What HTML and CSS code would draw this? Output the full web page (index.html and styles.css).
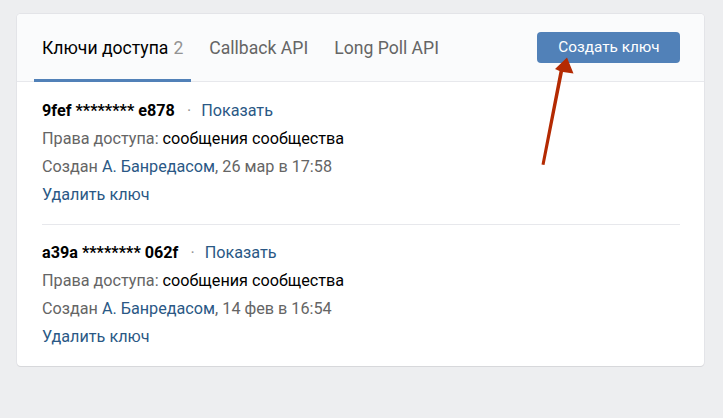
FILE: index.html
```html
<!DOCTYPE html>
<html lang="ru">
<head>
<meta charset="utf-8">
<link rel="stylesheet" href="styles.css">
</head>
<body>
<div class="page">
  <div class="card">
    <div class="tabs">
      <div class="tab active">Ключи доступа <span class="count">2</span></div>
      <div class="tab">Callback API</div>
      <div class="tab">Long Poll API</div>
      <div class="spacer"></div>
      <button class="btn">Создать ключ</button>
    </div>
    <div class="keys">
      <div class="key">
        <div class="row"><span class="token">9fef ******** e878</span><span class="dot">·</span><a class="link">Показать</a></div>
        <div class="row"><span class="label">Права доступа:</span> сообщения сообщества</div>
        <div class="row label">Создан <a class="link">А. Банредасом</a>, 26 мар в 17:58</div>
        <div class="row"><a class="link">Удалить ключ</a></div>
      </div>
      <div class="key">
        <div class="row"><span class="token">a39a ******** 062f</span><span class="dot">·</span><a class="link">Показать</a></div>
        <div class="row"><span class="label">Права доступа:</span> сообщения сообщества</div>
        <div class="row label">Создан <a class="link">А. Банредасом</a>, 14 фев в 16:54</div>
        <div class="row"><a class="link">Удалить ключ</a></div>
      </div>
    </div>
  </div>
  <svg class="arrow" width="723" height="418" viewBox="0 0 723 418">
    <path d="M541.5 164.5 L544.5 165 L563 72 L573.5 73.5 L567 57.5 L555 69 L559.5 71 Z" fill="#b42a02"/>
  </svg>
</div>
</body>
</html>
```

FILE: styles.css
```css
html, body {
  margin: 0;
  padding: 0;
  background: #edeef0;
  font-family: Roboto, "Open Sans", "Liberation Sans", sans-serif;
}

.page {
  position: relative;
  width: 723px;
  height: 418px;
  padding: 14px 0 0 17px;
  box-sizing: border-box;
}

.card {
  width: 687px;
  background: #fff;
  border-radius: 4px;
  box-shadow: 0 1px 0 0 #d7d8db, 0 0 0 1px #e3e4e8;
  overflow: hidden;
}

.tabs {
  display: flex;
  align-items: stretch;
  height: 68px;
  box-sizing: border-box;
  padding: 0 24px 0 17px;
  background: #fafbfc;
  border-bottom: 1px solid #e7e8ec;
  gap: 10px;
}

.tab {
  display: flex;
  align-items: center;
  padding: 0 8px;
  font-size: 17.6px;
  color: #656565;
  margin-bottom: -1px;
  border-bottom: 3px solid transparent;
  padding-top: 3px;
}

.tab.active {
  color: #000;
  border-bottom-color: #5181b8;
}

.count {
  color: #939393;
  margin-left: 5px;
}

.spacer {
  flex: 1;
}

.btn {
  align-self: center;
  width: 143px;
  height: 31px;
  margin-top: -1px;
  border: 0;
  border-radius: 4px;
  background: #5181b8;
  color: #fff;
  font-family: inherit;
  font-size: 15.3px;
  padding: 0 0 0 1px;
}

.keys {
  padding: 0 24px 0 25px;
}

.key {
  padding: 15px 0 15px;
}

.key + .key {
  border-top: 1px solid #e7e8ec;
  padding-top: 14px;
}

.row {
  height: 28px;
  line-height: 28px;
  font-size: 16.2px;
  color: #000;
  white-space: nowrap;
}

.label {
  color: #656565;
}

.token {
  font-weight: 700;
  color: #000;
}

.dot {
  color: #939393;
  margin: 0 10px 0 12px;
}

.link {
  color: #2a5885;
}

.arrow {
  position: absolute;
  left: 0;
  top: 0;
  pointer-events: none;
}
```
